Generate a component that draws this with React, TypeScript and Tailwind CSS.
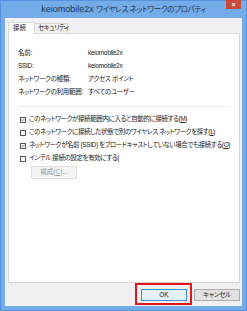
import { Check } from "lucide-react";

const jp = "font-['Liberation_Sans','Noto_Sans_CJK_JP',sans-serif] [font-feature-settings:'palt']";

const info = [
  ["名前:", "keiomobile2x"],
  ["SSID:", "keiomobile2x"],
  ["ネットワークの種類:", "アクセス ポイント"],
  ["ネットワークの利用範囲:", "すべてのユーザー"],
];

const options = [
  { checked: true, text: "このネットワークが接続範囲内に入ると自動的に接続する(", key: "M" },
  { checked: false, text: "このネットワークに接続した状態で別のワイヤレス ネットワークを探す(", key: "L" },
  { checked: true, text: "ネットワークが名前 (SSID) をブロードキャストしていない場合でも接続する(", key: "O" },
  { checked: false, text: "インテル 接続の設定を有効にする(", key: "" },
];

const App = () => {
  return (
    <div className={`w-[247px] h-[311px] bg-[#74ace9] border border-[#5592dd] flex flex-col ${jp}`}>
      {/* Title bar */}
      <div className="h-[17px] relative flex items-center justify-center">
        <p className="text-[9px] text-[#1f3550] leading-none whitespace-nowrap">
          keiomobile2x <span className="text-[7.5px] tracking-[-0.35px]">ワイヤレス ネットワークのプロパティ</span>
        </p>
        <div className="absolute top-[-1px] right-[5px] w-[15px] h-[9px] bg-[#c9483c] flex items-center justify-center">
          <span className="text-white text-[7px] leading-none font-bold">×</span>
        </div>
      </div>

      {/* Body */}
      <div className="flex-1 mx-[4px] mb-[4px] bg-[#f0f0f0] flex flex-col pl-[3px] pr-[2px]">
        {/* Tabs */}
        <div className="mt-[4px] h-[11px] flex items-end">
          <div className="w-[27px] h-[12px] bg-white border border-b-0 border-[#d9d9d9] flex items-center pl-[4px] relative top-[1px] z-10">
            <span className="text-[6.5px] leading-none text-[#222] whitespace-nowrap">接続</span>
          </div>
          <div className="w-[33px] h-[10px] bg-[#f0f0f0] border border-b-0 border-l-0 border-[#d9d9d9] flex items-center pl-[3px]">
            <span className="text-[6.5px] leading-none text-[#222] whitespace-nowrap tracking-[-0.5px]">セキュリティ</span>
          </div>
        </div>

        {/* Panel */}
        <div className="h-[250px] bg-white border border-[#d9d9d9] pt-[13px] pl-[9px] pr-[8px]">
          <div className="flex flex-col">
            {info.map(([k, v]) => (
              <div key={k} className="h-[13px] flex items-center text-[6.5px] text-[#222] leading-none whitespace-nowrap tracking-[-0.3px]">
                <span className="w-[70px] shrink-0">{k}</span>
                <span>{v}</span>
              </div>
            ))}
          </div>
          <div className="mt-[7px] h-px bg-[#ececec]" />
          <div className="mt-[6px] flex flex-col">
            {options.map((o, i) => (
              <div key={i} className="h-[13px] flex items-center gap-[3px] pl-[2px] text-[6.5px] text-[#222] leading-none">
                <span className="w-[6px] h-[6px] shrink-0 border border-[#555] bg-white flex items-center justify-center">
                  {o.checked && <Check size={6} strokeWidth={4} className="text-[#222]" />}
                </span>
                <span className="whitespace-nowrap tracking-[-0.4px]">
                  {o.text}
                  {o.key && (
                    <>
                      <span className="underline">{o.key}</span>)
                    </>
                  )}
                </span>
              </div>
            ))}
          </div>
          <div className="mt-[1px] ml-[13px] w-[46px] h-[13px] bg-[#f4f4f4] border border-[#e0e0e0] flex items-center justify-center">
            <span className="text-[6.5px] leading-none text-[#9a9a9a] whitespace-nowrap">
              構成(<span className="underline">C</span>)...
            </span>
          </div>
        </div>

        {/* Buttons */}
        <div className="flex-1 flex justify-end items-start pt-[6px] gap-[7px]">
          <div className="relative w-[46px] h-[12px] bg-[#e5f1fb] border border-[#3c8fe0] flex items-center justify-center">
            <span className="text-[6.5px] leading-none text-[#222]">OK</span>
            <div className="absolute -left-[7px] -top-[7px] w-[57px] h-[22px] border-[2px] border-[#e3141c]" />
          </div>
          <div className="w-[46px] h-[12px] bg-[#e1e1e1] border border-[#adadad] flex items-center justify-center">
            <span className="text-[6.5px] leading-none text-[#222] whitespace-nowrap tracking-[-0.3px]">キャンセル</span>
          </div>
        </div>
      </div>
    </div>
  );
};

export default App;
